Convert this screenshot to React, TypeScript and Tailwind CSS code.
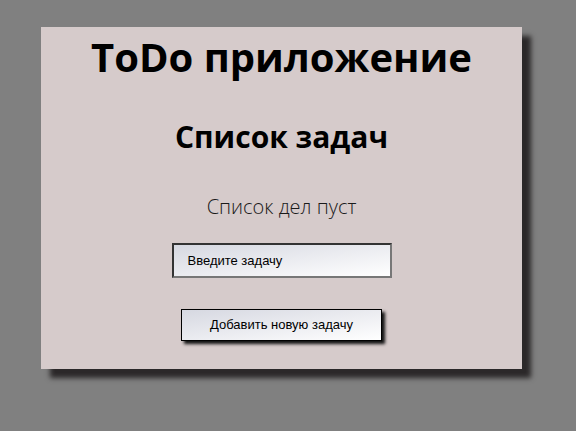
export default function App() {
  return (
    <div className="min-h-[431px] bg-[#808080] pt-[27px] pb-4">
      <div
        className="ml-[41px] w-[481px] h-[342px] bg-[#d6cbcb] shadow-[9px_9px_5px_#2b2829] flex flex-col items-center pt-[6px] text-black"
        style={{ fontFamily: '"Open Sans", sans-serif' }}
      >
        <h1 className="text-[40px] leading-[48px] font-bold">ToDo приложение</h1>
        <h2 className="mt-[38px] text-[30px] leading-[36px] font-bold">Список задач</h2>
        <p className="mt-[38px] text-[20px] leading-[28px] font-light text-[#1a1a1a]">Список дел пуст</p>
        <input
          type="text"
          placeholder="Введите задачу"
          className="mt-[22px] w-[220px] h-[35px] border-2 border-t-[#333] border-l-[#333] border-b-[#777] border-r-[#777] bg-linear-to-br from-[#d6d8e1] to-white pl-[14px] text-[13px] placeholder:text-black outline-none"
          style={{ fontFamily: '"Liberation Sans", Arial, sans-serif' }}
        />
        <button
          className="mt-[31px] w-[201px] h-[32px] border border-black bg-linear-to-br from-[#d6d8e1] to-white shadow-[3px_3px_3px_#111] text-[13px] text-black"
          style={{ fontFamily: '"Liberation Sans", Arial, sans-serif' }}
        >
          Добавить новую задачу
        </button>
      </div>
    </div>
  );
}
